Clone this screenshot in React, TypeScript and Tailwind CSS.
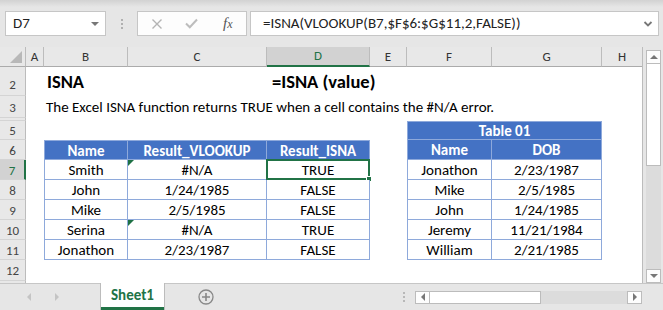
import React from "react";

const F = { fontFamily: "Carlito, Lato, 'Liberation Sans', sans-serif" } as React.CSSProperties;

function RH({ n, h, sel, end }: { n?: string; h: string; sel?: boolean; end?: boolean }) {
  return (
    <div
      className={`${h} w-[26px] shrink-0 flex justify-center text-[13px] border-b border-[#d4d4d4] ${
        end ? "items-end pb-[1px]" : "items-center pt-[2px]"
      } ${
        sel
          ? "bg-[#d2d2d2] text-[#217346] border-r-2 border-r-[#217346]"
          : "bg-[#e8e8e8] text-[#444] border-r border-r-[#bcbcbc]"
      }`}
    >
      {n}
    </div>
  );
}

function Tri() {
  return (
    <div className="absolute left-0 top-0 w-0 h-0 border-t-[6px] border-t-[#1e7145] border-r-[6px] border-r-transparent" />
  );
}

type CellProps = {
  w: string;
  children?: React.ReactNode;
  head?: boolean;
  first?: boolean;
  top?: boolean;
  tri?: boolean;
  sel?: boolean;
};

function TC({ w, children, head, first, top, tri, sel }: CellProps) {
  return (
    <div
      className={`${w} shrink-0 relative flex items-center justify-center pt-[2px] text-[15px] whitespace-nowrap border-r border-b border-[#8ea9db] ${
        first ? "border-l" : ""
      } ${top ? "border-t" : ""} ${head ? "bg-[#4472c4] text-white font-bold" : "bg-white text-black"}`}
    >
      {tri && <Tri />}
      {children}
      {sel && (
        <div className="absolute -left-[1px] -top-[1px] -right-[1px] -bottom-[1px] border-2 border-[#217346]">
          <div className="absolute -right-[4px] -bottom-[4px] w-[6px] h-[6px] bg-[#217346] border border-white" />
        </div>
      )}
    </div>
  );
}

function E({ w }: { w: string }) {
  return <div className={`${w} shrink-0`} />;
}

const left = [
  ["Smith", "#N/A", "TRUE"],
  ["John", "1/24/1985", "FALSE"],
  ["Mike", "2/5/1985", "FALSE"],
  ["Serina", "#N/A", "TRUE"],
  ["Jonathon", "2/23/1987", "FALSE"],
];
const right = [
  ["Jonathon", "2/23/1987"],
  ["Mike", "2/5/1985"],
  ["John", "1/24/1985"],
  ["Jeremy", "11/21/1984"],
  ["William", "2/21/1985"],
];

function ColHead({ w, l, sel, last }: { w: string; l: string; sel?: boolean; last?: boolean }) {
  return (
    <div
      className={`${w} shrink-0 h-full flex items-center justify-center text-[13px] ${
        last ? "" : "border-r border-r-[#bcbcbc]"
      } ${sel ? "bg-[#d2d2d2] text-[#217346] border-b-2 border-b-[#217346]" : "bg-[#e8e8e8] text-[#333] border-b border-b-[#ababab]"}`}
    >
      {l}
    </div>
  );
}

export default function App() {
  return (
    <div className="w-[663px] h-[310px] bg-[#e6e6e6] overflow-hidden flex flex-col text-[14px]" style={F}>
      {/* formula bar */}
      <div className="h-[47px] shrink-0 flex flex-col">
        <div className="h-[7px] bg-linear-to-b from-[#d2d2d2] to-[#e6e6e6]" />
        <div className="flex items-start pt-[4px] pl-[5px]">
          <div className="w-[101px] h-[25px] bg-white border border-[#c6c6c6] flex items-center pl-[7px] pr-[6px] justify-between">
            <span className="text-[15px] text-[#222]">D7</span>
            <div className="w-0 h-0 border-l-[4px] border-r-[4px] border-t-[4px] border-l-transparent border-r-transparent border-t-[#777]" />
          </div>
          <div className="w-[31px] h-[25px] flex flex-col items-center justify-center gap-[2px]">
            <div className="w-[2px] h-[2px] bg-[#b0b0b0]" />
            <div className="w-[2px] h-[2px] bg-[#b0b0b0]" />
            <div className="w-[2px] h-[2px] bg-[#b0b0b0]" />
          </div>
          <div className="w-[110px] h-[25px] bg-[#fdfdfd] border border-[#c6c6c6] flex items-center">
            <svg width="12" height="12" viewBox="0 0 12 12" className="ml-[13px]">
              <path d="M1.5 1.5 L10.5 10.5 M10.5 1.5 L1.5 10.5" stroke="#b4b4b4" strokeWidth="1.4" fill="none" />
            </svg>
            <svg width="13" height="11" viewBox="0 0 13 11" className="ml-[22px]">
              <path d="M1 5.5 L4.8 9.3 L12 1.5" stroke="#bdbdbd" strokeWidth="2" fill="none" />
            </svg>
            <span
              className="ml-[25px] text-[15px] italic text-[#555]"
              style={{ fontFamily: "'Liberation Serif', serif" }}
            >
              f<span className="text-[12px]">x</span>
            </span>
          </div>
          <div className="ml-[3px] w-[409px] h-[25px] bg-white border border-[#c6c6c6] flex items-center justify-between pl-[12px] pr-[5px]">
            <span className="text-[15px] text-[#222] whitespace-nowrap">=ISNA(VLOOKUP(B7,$F$6:$G$11,2,FALSE))</span>
            <svg width="10" height="8" viewBox="0 0 10 8">
              <path d="M1.5 2 L5 5.5 L8.5 2" stroke="#777" strokeWidth="1.8" fill="none" />
            </svg>
          </div>
        </div>
      </div>

      {/* main */}
      <div className="flex h-[236px] shrink-0">
        <div className="w-[643px] shrink-0 flex flex-col bg-white border-r border-[#bcbcbc]">
          {/* column headers */}
          <div className="flex h-[20px] shrink-0">
            <div className="w-[26px] h-full bg-[#e8e8e8] border-r border-r-[#bcbcbc] border-b border-b-[#ababab] relative">
              <div className="absolute right-[3px] bottom-[3px] w-0 h-0 border-l-[12px] border-l-transparent border-b-[12px] border-b-[#b8b8b8]" />
            </div>
            <ColHead w="w-[18px]" l="A" />
            <ColHead w="w-[84px]" l="B" />
            <ColHead w="w-[139px]" l="C" />
            <ColHead w="w-[103px]" l="D" sel />
            <ColHead w="w-[37px]" l="E" />
            <ColHead w="w-[85px]" l="F" />
            <ColHead w="w-[110px]" l="G" />
            <ColHead w="w-[40px]" l="H" last />
          </div>

          {/* row 2 */}
          <div className="flex h-[29px] shrink-0">
            <RH n="2" h="h-[29px]" end />
            <E w="w-[18px]" />
            <div className="w-[223px] shrink-0 flex items-end pl-[3px] text-[18.5px] font-bold text-black">ISNA</div>
            <div className="w-[103px] shrink-0 flex items-end pl-[5px] text-[18.5px] font-bold text-black whitespace-nowrap">
              =ISNA (value)
            </div>
          </div>
          {/* row 3 */}
          <div className="flex h-[22px] shrink-0">
            <RH n="3" h="h-[22px]" />
            <E w="w-[18px]" />
            <div className="w-[84px] shrink-0 flex items-center pt-[1px] pl-[2px] text-[15px] text-black whitespace-nowrap">
              The Excel ISNA function returns TRUE when a cell contains the #N/A error.
            </div>
          </div>
          {/* hidden row 4 */}
          <div className="flex h-[3px] shrink-0">
            <RH h="h-[3px]" />
          </div>
          {/* row 5 */}
          <div className="flex h-[19px] shrink-0">
            <RH n="5" h="h-[19px]" />
            <E w="w-[18px]" />
            <E w="w-[84px]" />
            <E w="w-[139px]" />
            <E w="w-[103px]" />
            <E w="w-[37px]" />
            <TC w="w-[195px]" head first top>
              Table 01
            </TC>
          </div>
          {/* row 6 */}
          <div className="flex h-[20px] shrink-0">
            <RH n="6" h="h-[20px]" />
            <E w="w-[18px]" />
            <TC w="w-[84px]" head first top>
              Name
            </TC>
            <TC w="w-[139px]" head top>
              Result_VLOOKUP
            </TC>
            <TC w="w-[103px]" head top>
              Result_ISNA
            </TC>
            <E w="w-[37px]" />
            <TC w="w-[85px]" head first>
              Name
            </TC>
            <TC w="w-[110px]" head>
              DOB
            </TC>
          </div>
          {left.map((r, i) => (
            <div key={i} className="flex h-[20px] shrink-0">
              <RH n={String(7 + i)} h="h-[20px]" sel={i === 0} />
              <E w="w-[18px]" />
              <TC w="w-[84px]" first>
                {r[0]}
              </TC>
              <TC w="w-[139px]" tri={r[1] === "#N/A"}>
                {r[1]}
              </TC>
              <TC w="w-[103px]" sel={i === 0}>
                {r[2]}
              </TC>
              <E w="w-[37px]" />
              <TC w="w-[85px]" first>
                {right[i][0]}
              </TC>
              <TC w="w-[110px]">{right[i][1]}</TC>
            </div>
          ))}
          {/* row 12 */}
          <div className="flex h-[21px] shrink-0">
            <RH n="12" h="h-[21px]" />
          </div>
          <div className="flex h-[2px] shrink-0">
            <RH h="h-[2px]" />
          </div>
        </div>
        {/* vertical scrollbar */}
        <div className="w-[20px] shrink-0 flex flex-col pt-[3px] pl-[3px]">
          <div className="w-[15px] h-[14px] bg-[#fdfdfd] border border-[#bcbcbc] flex items-center justify-center">
            <div className="w-0 h-0 border-l-[4px] border-r-[4px] border-b-[4px] border-l-transparent border-r-transparent border-b-[#777]" />
          </div>
          <div className="w-[15px] h-[102px] bg-white border border-[#bcbcbc] border-t-0" />
          <div className="w-[15px] h-[103px] bg-[#dcdcdc]" />
          <div className="w-[15px] h-[14px] bg-[#fdfdfd] border border-[#bcbcbc] flex items-center justify-center">
            <div className="w-0 h-0 border-l-[4px] border-r-[4px] border-t-[4px] border-l-transparent border-r-transparent border-t-[#777]" />
          </div>
        </div>
      </div>

      {/* bottom bar */}
      <div className="h-[27px] shrink-0 flex items-stretch border-t border-[#c6c6c6]">
        <div className="w-[100px] shrink-0 flex items-center">
          <div className="ml-[27px] w-0 h-0 border-t-[4px] border-b-[4px] border-r-[4px] border-t-transparent border-b-transparent border-r-[#c4c4c4]" />
          <div className="ml-[24px] w-0 h-0 border-t-[4px] border-b-[4px] border-l-[4px] border-t-transparent border-b-transparent border-l-[#c4c4c4]" />
        </div>
        <div className="w-[65px] shrink-0 bg-white border-x border-[#bcbcbc] -mt-[1px] flex flex-col">
          <div className="flex-1 flex items-center justify-center text-[15px] font-bold text-[#217346]">Sheet1</div>
          <div className="h-[3px] bg-[#217346]" />
        </div>
        <div className="w-[82px] shrink-0 flex items-center pl-[33px]">
          <svg width="16" height="16" viewBox="0 0 16 16">
            <circle cx="8" cy="8" r="7" stroke="#888" strokeWidth="1.3" fill="none" />
            <path d="M8 4 V12 M4 8 H12" stroke="#888" strokeWidth="1.6" />
          </svg>
        </div>
        <div className="w-[168px] shrink-0 flex items-center justify-end pr-[10px]">
          <div className="flex flex-col gap-[2px]">
            <div className="w-[2px] h-[2px] bg-[#b8b8b8]" />
            <div className="w-[2px] h-[2px] bg-[#b8b8b8]" />
            <div className="w-[2px] h-[2px] bg-[#b8b8b8]" />
          </div>
        </div>
        <div className="w-[227px] shrink-0 flex items-center">
          <div className="flex h-[13px] w-full">
            <div className="w-[15px] h-full bg-[#fdfdfd] border border-[#bcbcbc] flex items-center justify-center">
              <div className="w-0 h-0 border-t-[4px] border-b-[4px] border-r-[4px] border-t-transparent border-b-transparent border-r-[#777]" />
            </div>
            <div className="w-[111px] h-full bg-white border-y border-r border-[#bcbcbc]" />
            <div className="flex-1 h-full bg-[#dcdcdc]" />
            <div className="w-[15px] h-full bg-[#fdfdfd] border border-[#bcbcbc] flex items-center justify-center">
              <div className="w-0 h-0 border-t-[4px] border-b-[4px] border-l-[4px] border-t-transparent border-b-transparent border-l-[#777]" />
            </div>
          </div>
        </div>
      </div>
    </div>
  );
}
